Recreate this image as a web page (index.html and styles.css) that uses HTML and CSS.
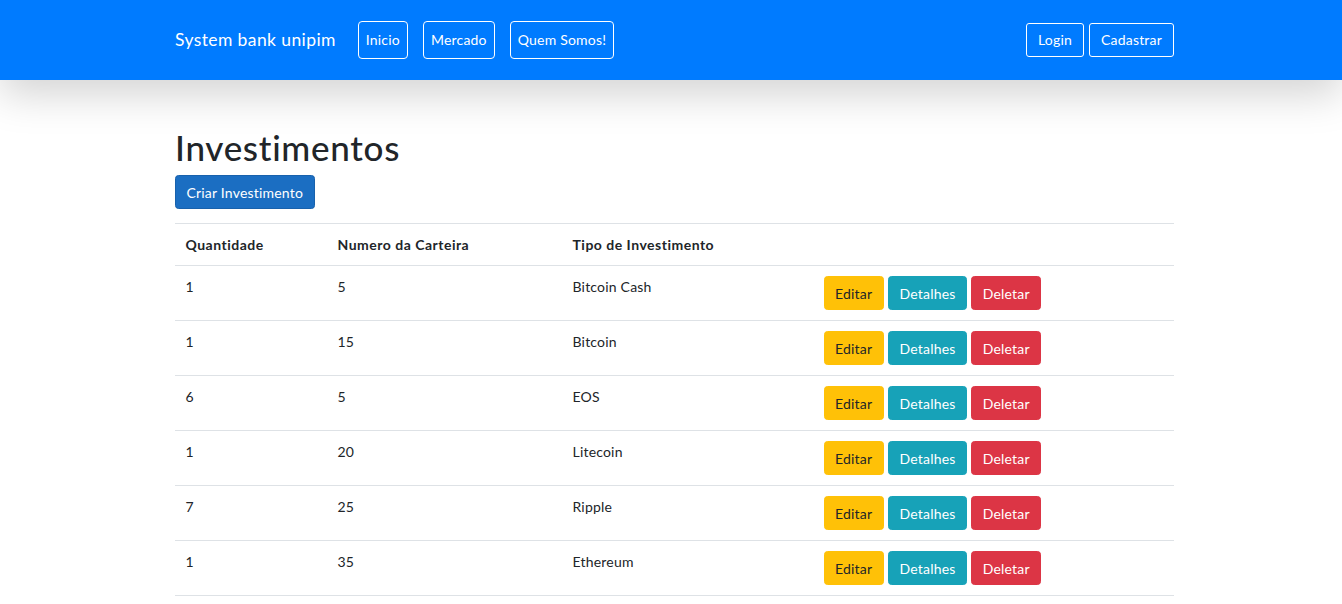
FILE: index.html
```html
<!DOCTYPE html>
<html lang="pt">
<head>
<meta charset="utf-8">
<title>Investimentos - System bank unipim</title>
<link rel="stylesheet" href="styles.css">
</head>
<body>
<header class="navbar">
  <div class="wrap nav-inner">
    <a class="brand" href="#">System bank unipim</a>
    <ul class="nav-left">
      <li><a class="nav-btn" href="#">Inicio</a></li>
      <li><a class="nav-btn" href="#">Mercado</a></li>
      <li><a class="nav-btn" href="#">Quem Somos!</a></li>
    </ul>
    <div class="nav-right">
      <a class="auth-btn" href="#">Login</a>
      <a class="auth-btn" href="#">Cadastrar</a>
    </div>
  </div>
</header>
<main class="wrap main">
  <h1 class="title">Investimentos</h1>
  <p class="actions"><a class="btn btn-primary" href="#">Criar Investimento</a></p>
  <table class="table">
    <thead>
      <tr>
        <th class="c1">Quantidade</th>
        <th class="c2">Numero da Carteira</th>
        <th class="c3">Tipo de Investimento</th>
        <th></th>
      </tr>
    </thead>
    <tbody>
      <tr><td>1</td><td>5</td><td>Bitcoin Cash</td><td class="ops"><a class="btn btn-warning" href="#">Editar</a> <a class="btn btn-info" href="#">Detalhes</a> <a class="btn btn-danger" href="#">Deletar</a></td></tr>
      <tr><td>1</td><td>15</td><td>Bitcoin</td><td class="ops"><a class="btn btn-warning" href="#">Editar</a> <a class="btn btn-info" href="#">Detalhes</a> <a class="btn btn-danger" href="#">Deletar</a></td></tr>
      <tr><td>6</td><td>5</td><td>EOS</td><td class="ops"><a class="btn btn-warning" href="#">Editar</a> <a class="btn btn-info" href="#">Detalhes</a> <a class="btn btn-danger" href="#">Deletar</a></td></tr>
      <tr><td>1</td><td>20</td><td>Litecoin</td><td class="ops"><a class="btn btn-warning" href="#">Editar</a> <a class="btn btn-info" href="#">Detalhes</a> <a class="btn btn-danger" href="#">Deletar</a></td></tr>
      <tr><td>7</td><td>25</td><td>Ripple</td><td class="ops"><a class="btn btn-warning" href="#">Editar</a> <a class="btn btn-info" href="#">Detalhes</a> <a class="btn btn-danger" href="#">Deletar</a></td></tr>
      <tr><td>1</td><td>35</td><td>Ethereum</td><td class="ops"><a class="btn btn-warning" href="#">Editar</a> <a class="btn btn-info" href="#">Detalhes</a> <a class="btn btn-danger" href="#">Deletar</a></td></tr>
    </tbody>
  </table>
</main>
</body>
</html>
```

FILE: styles.css
```css
* { box-sizing: border-box; }
html { font-size: 14px; }
body {
  margin: 0;
  font-family: Lato, "Liberation Sans", Arial, sans-serif;
  font-size: 14px;
  line-height: 1.5;
  letter-spacing: 0.2px;
  color: #212529;
  background: #fff;
  overflow: hidden;
}
a { text-decoration: none; }

.wrap {
  padding-left: 175px;
  padding-right: 168px;
}

.navbar {
  position: relative;
  z-index: 1;
  height: 80px;
  background: #007bff;
  box-shadow: 0 14px 42px rgba(0, 0, 0, 0.175);
}
.nav-inner {
  height: 80px;
  display: flex;
  align-items: center;
}
.brand {
  color: #fff;
  font-size: 17.5px;
  line-height: 1.5;
  letter-spacing: 0.4px;
  margin-right: 22px;
  white-space: nowrap;
}
.nav-left {
  display: flex;
  gap: 15px;
  list-style: none;
  margin: 0;
  padding: 0;
  flex: 1;
}
.nav-btn {
  display: block;
  color: #fff;
  border: 1px solid #fff;
  border-radius: 4px;
  padding: 7px 7px 8px;
  line-height: 21px;
  font-size: 14px;
}
.nav-right {
  display: flex;
  gap: 5px;
}
.auth-btn {
  display: block;
  color: #fff;
  border: 1px solid #fff;
  border-radius: 3px;
  padding: 6px 11px;
  line-height: 20px;
  font-size: 14px;
}

.main {
  padding-top: 46px;
}
.title {
  margin: 0 0 7px;
  font-size: 35px;
  font-weight: 500;
  line-height: 1.2;
  letter-spacing: 0.7px;
}
.actions {
  margin: 0 0 14px;
}

.btn {
  display: inline-block;
  font-size: 14px;
  line-height: 21px;
  padding: 5.5px 10.5px;
  border: 1px solid transparent;
  border-radius: 3.5px;
  color: #fff;
}
.btn-primary { background: #1b6ec2; border-color: #1861ac; }
.btn-warning { background: #ffc107; border-color: #ffc107; color: #212529; }
.btn-info { background: #17a2b8; border-color: #17a2b8; }
.btn-danger { background: #dc3545; border-color: #dc3545; }

.table {
  width: 999px;
  border-collapse: collapse;
}
.table th,
.table td {
  padding: 10px 10.5px;
  border-top: 1px solid #dee2e6;
  text-align: left;
  vertical-align: top;
  line-height: 21px;
}
.table th { font-weight: 700; letter-spacing: 0.5px; }
.table tbody tr:last-child td { border-bottom: 1px solid #dee2e6; }
.c1 { width: 152px; }
.c2 { width: 235px; }
.c3 { width: 251px; }
.ops { font-size: 0; }
.ops .btn { margin-right: 4px; font-size: 14px; }
```
